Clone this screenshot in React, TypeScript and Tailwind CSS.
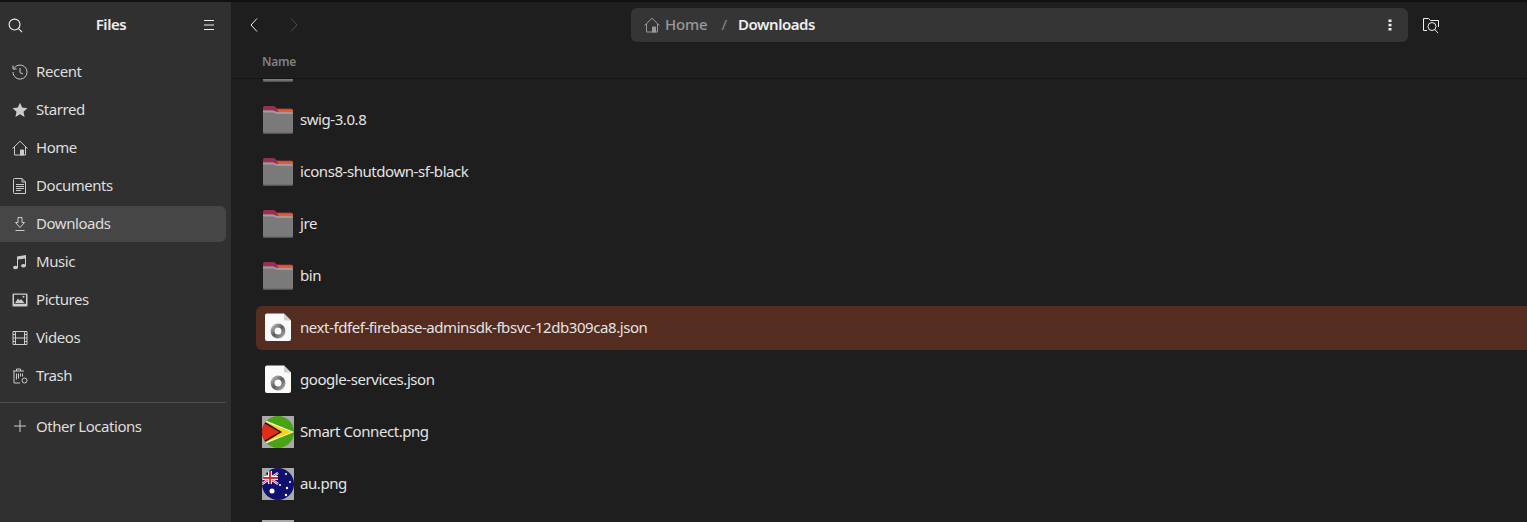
const font = "font-['Noto_Sans','Open_Sans',sans-serif]";

const HomeIcon = ({ className }: { className: string }) => (
  <svg viewBox="0 0 16 16" className={className} fill="none" stroke="currentColor" strokeWidth="1">
    <path d="M0.500 8.500 8 1.200l7.500 7.300M2.500 7v8h11V7" />
    <path d="M8.500 15v-5h3v5z" fill="currentColor" />
  </svg>
);

const NavIcon = ({ name }: { name: string }) => {
  if (name === "Home") return <HomeIcon className="w-4 h-4" />;
  if (name === "Recent")
    return (
      <svg viewBox="0 0 16 16" className="w-4 h-4" fill="none" stroke="currentColor" strokeWidth="1">
        <path d="M2.300 4A7 7 0 1 1 1 8" />
        <path d="M1 1.500V5h3.500M8 4v4.500l3 1.500" />
      </svg>
    );
  if (name === "Starred")
    return (
      <svg viewBox="0 0 16 16" className="w-4 h-4" fill="currentColor">
        <path d="M8 .8l2.200 4.800 5.200.6-3.900 3.500 1.100 5.200L8 12.300l-4.600 2.600 1.100-5.200L.6 6.200l5.200-.6z" />
      </svg>
    );
  if (name === "Documents")
    return (
      <svg viewBox="0 0 16 16" className="w-4 h-4" fill="none" stroke="currentColor" strokeWidth="1">
        <path d="M2.500.5h7.500l3.500 3.500v11.500h-11a1 1 0 0 1-1-1v-13a1 1 0 0 1 1-1z" />
        <path d="M10 .5V4h3.500M4 6.500h8M4 8.500h8M4 10.500h8M4 12.500h5" />
      </svg>
    );
  if (name === "Downloads")
    return (
      <svg viewBox="0 0 16 16" className="w-4 h-4" fill="none" stroke="currentColor" strokeWidth="1">
        <path d="M6 1.500h4v5h2.500L8 11.500l-4.500-5H6zM3.500 14.500h9" />
      </svg>
    );
  if (name === "Music")
    return (
      <svg viewBox="0 0 16 16" className="w-4 h-4" fill="currentColor">
        <path d="M5 2.500 14 1v10.500h-1V4.500L6 5.600v8.400H5z" />
        <ellipse cx="3.500" cy="13.500" rx="2.500" ry="1.800" />
        <ellipse cx="11.500" cy="11.800" rx="2.500" ry="1.800" />
      </svg>
    );
  if (name === "Pictures")
    return (
      <svg viewBox="0 0 16 16" className="w-4 h-4">
        <path fill="currentColor" fillRule="evenodd" d="M1.500 1.500h13a1 1 0 0 1 1 1v11a1 1 0 0 1-1 1h-13a1 1 0 0 1-1-1v-11a1 1 0 0 1 1-1zm.5 1.200v9h12v-9z" />
        <path fill="currentColor" d="M3 11l3-4.500 1.500 2L9 7l3.500 4z" />
        <circle cx="11.500" cy="4.800" r="1" fill="currentColor" />
      </svg>
    );
  if (name === "Videos")
    return (
      <svg viewBox="0 0 16 16" className="w-4 h-4" fill="none" stroke="currentColor" strokeWidth="1">
        <path d="M1 1.500h14v13H1zM3.500 1.500v13M12.500 1.500v13M3.500 8h9M1 4.500h2.500M1 8h2.500M1 11.500h2.500M12.500 4.500H15M12.500 8H15M12.500 11.500H15" />
      </svg>
    );
  return (
    <svg viewBox="0 0 16 16" className="w-4 h-4" fill="none" stroke="currentColor" strokeWidth="1">
      <path d="M1 3h11M4.500 3V1h4v2M2 3v12h6M4.500 5.500v6M6.500 5.500v5M8.500 5.500v3M10.500 5.500v3" />
      <circle cx="12.500" cy="12.500" r="2.500" />
    </svg>
  );
};

const Folder = () => (
  <svg viewBox="0 0 32 32" className="w-8 h-8 shrink-0">
    <path d="M1 4a2 2 0 0 1 2-2h9l3 2.500h14a2 2 0 0 1 2 2V11H1z" fill="#9a2f55" />
    <path d="M15 5.200h14.500a1.500 1.500 0 0 1 1.500 1.500V9H17z" fill="#dc5f2c" />
    <path d="M1 6.500h10l4 1.500h14.500a1.500 1.500 0 0 1 1.500 1.500V28a2 2 0 0 1-2 2H3a2 2 0 0 1-2-2z" fill="#7a7a7a" />
    <path d="M1 6.500h10l4 1.500h14.500a1.500 1.500 0 0 1 1.500 1.500v.6H15l-4-1.500H1z" fill="#a8969c" />
    <path d="M1 28.800h30V28a2 2 0 0 1-2 2H3a2 2 0 0 1-2-1.200z" fill="#555" />
  </svg>
);

const JsonFile = () => (
  <svg viewBox="0 0 32 32" className="w-8 h-8 shrink-0">
    <defs>
      <linearGradient id="ring" x1="0" y1="0" x2="1" y2="1">
        <stop offset="0" stopColor="#b5b5b5" />
        <stop offset="0.5" stopColor="#5a5a5a" />
        <stop offset="1" stopColor="#a5a5a5" />
      </linearGradient>
    </defs>
    <path d="M5 1.500h17l7 7V27a2 2 0 0 1-2 2H5a2 2 0 0 1-2-2V3.500a2 2 0 0 1 2-2z" fill="#fafafa" />
    <path d="M22 1.500l7 7h-6a1 1 0 0 1-1-1z" fill="#cfcfcf" />
    <circle cx="16" cy="19" r="5.500" fill="none" stroke="url(#ring)" strokeWidth="4" />
  </svg>
);

const GuyanaThumb = () => (
  <svg viewBox="0 0 32 32" className="w-8 h-8 shrink-0">
    <rect width="32" height="32" fill="#a9a9a9" />
    <clipPath id="gy"><circle cx="16" cy="16" r="16" /></clipPath>
    <g clipPath="url(#gy)">
      <rect width="32" height="32" fill="#4aa313" />
      <path d="M0 3 32 16 0 29z" fill="#fff" />
      <path d="M0 4.500 30 16 0 27.500z" fill="#fbd010" />
      <path d="M0 4 20 16 0 28z" fill="#111" />
      <path d="M0 6 17.500 16 0 26z" fill="#e22b1a" />
    </g>
  </svg>
);

const AustraliaThumb = () => (
  <svg viewBox="0 0 32 32" className="w-8 h-8 shrink-0">
    <rect width="32" height="32" fill="#a9a9a9" />
    <clipPath id="au"><circle cx="16" cy="16" r="16" /></clipPath>
    <g clipPath="url(#au)">
      <rect width="32" height="32" fill="#10106e" />
      <path d="M0 5 16 16M16 5 0 16" stroke="#fff" strokeWidth="2.500" />
      <path d="M0 5 16 16M16 5 0 16" stroke="#d8283c" strokeWidth="1" />
      <path d="M8 3v13M0 10h16" stroke="#fff" strokeWidth="4" />
      <path d="M8 3v13M0 10h16" stroke="#d8283c" strokeWidth="2" />
      <circle cx="10" cy="23" r="2.500" fill="#fff" />
      <circle cx="24" cy="6" r="1" fill="#fff" />
      <circle cx="18" cy="17" r="1" fill="#fff" />
      <circle cx="28" cy="14" r="1" fill="#fff" />
      <circle cx="25" cy="20" r="1.200" fill="#fff" />
      <circle cx="24" cy="27" r="1.200" fill="#fff" />
    </g>
  </svg>
);

const navItems = ["Recent", "Starred", "Home", "Documents", "Downloads", "Music", "Pictures", "Videos", "Trash"];

const Sidebar = () => (
  <div className="w-[231px] shrink-0 bg-[#303030] text-[#dedede]">
    <div className="h-[46px] flex items-center justify-between pl-[8px] pr-[16px]">
      <svg viewBox="0 0 16 16" className="w-[15px] h-[15px] text-[#eeeeee]" fill="none" stroke="currentColor" strokeWidth="1.200">
        <circle cx="7" cy="7" r="5.800" />
        <path d="M11 11l4 4" />
      </svg>
      <div className="text-[15px] font-semibold text-[#eeeeee] tracking-[-0.4px] pr-[4px] pb-[2px]">Files</div>
      <svg viewBox="0 0 12 12" className="w-[12px] h-[12px] text-[#eeeeee]" fill="none" stroke="currentColor" strokeWidth="1">
        <path d="M1 1.500h10M1 6h10M1 10.500h10" />
      </svg>
    </div>
    <div className="pt-[6px]">
      {navItems.map((item) => (
        <div key={item} className={`h-[36px] mb-[2px] w-[226px] flex items-center gap-[8px] pl-[12px] rounded-r-[6px] text-[15px] ${item === "Downloads" ? "bg-[#464646]" : ""}`}>
          <span className="text-[#cccccc]"><NavIcon name={item} /></span>
          <span className="tracking-[-0.45px] pb-[1px]">{item}</span>
        </div>
      ))}
    </div>
    <div className="w-[226px] h-px bg-[#4c4c4c] mt-[8px]" />
    <div className="h-[46px] flex items-center gap-[8px] pl-[12px] text-[15px]">
      <svg viewBox="0 0 16 16" className="w-4 h-4 text-[#cccccc]" fill="none" stroke="currentColor" strokeWidth="1">
        <path d="M8 2v12M2 8h12" />
      </svg>
      <span className="tracking-[-0.45px]">Other Locations</span>
    </div>
  </div>
);

const Toolbar = () => (
  <div className="h-[46px] flex items-center text-[#eeeeee]">
    <svg viewBox="0 0 10 16" className="ml-[18px] w-[10px] h-[16px]" fill="none" stroke="currentColor" strokeWidth="1">
      <path d="M8 1.500 2 8l6 6.500" />
    </svg>
    <svg viewBox="0 0 10 16" className="ml-[30px] w-[10px] h-[16px] text-[#4d4d4d]" fill="none" stroke="currentColor" strokeWidth="1">
      <path d="M2 1.500 8 8l-6 6.500" />
    </svg>
    <div className="ml-[332px] w-[777px] h-[34px] bg-[#353535] rounded-[6px] flex items-center pl-[13px] pr-[16px] text-[15px] font-medium">
      <HomeIcon className="w-4 h-4 text-[#999999]" />
      <span className="ml-[5px] text-[#999999] tracking-[-0.2px] pb-[1px]">Home</span>
      <span className="ml-[14px] text-[#8a8a8a] font-normal pb-[1px]">/</span>
      <span className="ml-[11px] font-semibold tracking-[-0.45px] pb-[1px]">Downloads</span>
      <svg viewBox="0 0 4 12" className="ml-auto w-[4px] h-[12px]" fill="currentColor">
        <rect x="0.500" y="0.500" width="3" height="2.500" />
        <rect x="0.500" y="4.800" width="3" height="2.500" />
        <rect x="0.500" y="9" width="3" height="2.500" />
      </svg>
    </div>
    <svg viewBox="0 0 16 16" className="ml-[15px] w-4 h-4" fill="none" stroke="currentColor" strokeWidth="1">
      <path d="M4 13.500H.5v-12h5l2 2h8V10" />
      <circle cx="9" cy="9.500" r="4" />
      <path d="M11.800 12.500 15 16" />
    </svg>
  </div>
);

const rows = [
  { name: "", icon: <Folder /> },
  { name: "swig-3.0.8", icon: <Folder /> },
  { name: "icons8-shutdown-sf-black", icon: <Folder /> },
  { name: "jre", icon: <Folder /> },
  { name: "bin", icon: <Folder /> },
  { name: "next-fdfef-firebase-adminsdk-fbsvc-12db309ca8.json", icon: <JsonFile />, selected: true },
  { name: "google-services.json", icon: <JsonFile /> },
  { name: "Smart Connect.png", icon: <GuyanaThumb /> },
  { name: "au.png", icon: <AustraliaThumb /> },
];

export default function App() {
  return (
    <div className={`w-[1527px] h-[522px] overflow-hidden flex flex-col bg-[#1e1e1e] ${font}`}>
      <div className="h-[2px] shrink-0 bg-[#111111]" />
      <div className="flex flex-1 min-h-0">
        <Sidebar />
        <div className="flex-1 min-w-0 flex flex-col overflow-hidden">
          <div className="relative z-10 bg-[#1e1e1e] border-b border-[#141414]">
            <Toolbar />
            <div className="h-[30px] pl-[31px] pt-[5px] text-[12px] font-semibold text-[#808080] tracking-[-0.3px] leading-[18px]">Name</div>
          </div>
          <div className="-mt-[33px] pl-[25px] text-[15px] text-[#e4e4e4]">
            {rows.map((row, i) => (
              <div key={i} className={`h-[44px] mb-[8px] flex items-center gap-[6px] pl-[6px] rounded-l-[6px] ${row.selected ? "bg-[#542c20]" : ""}`}>
                {row.icon}
                <span className="tracking-[-0.44px] pb-[2px]">{row.name}</span>
              </div>
            ))}
            <div className="h-[44px] pl-[6px] pt-[6px]">
              <div className="w-8 h-8 bg-[#a9a9a9]" />
            </div>
          </div>
        </div>
      </div>
    </div>
  );
}
